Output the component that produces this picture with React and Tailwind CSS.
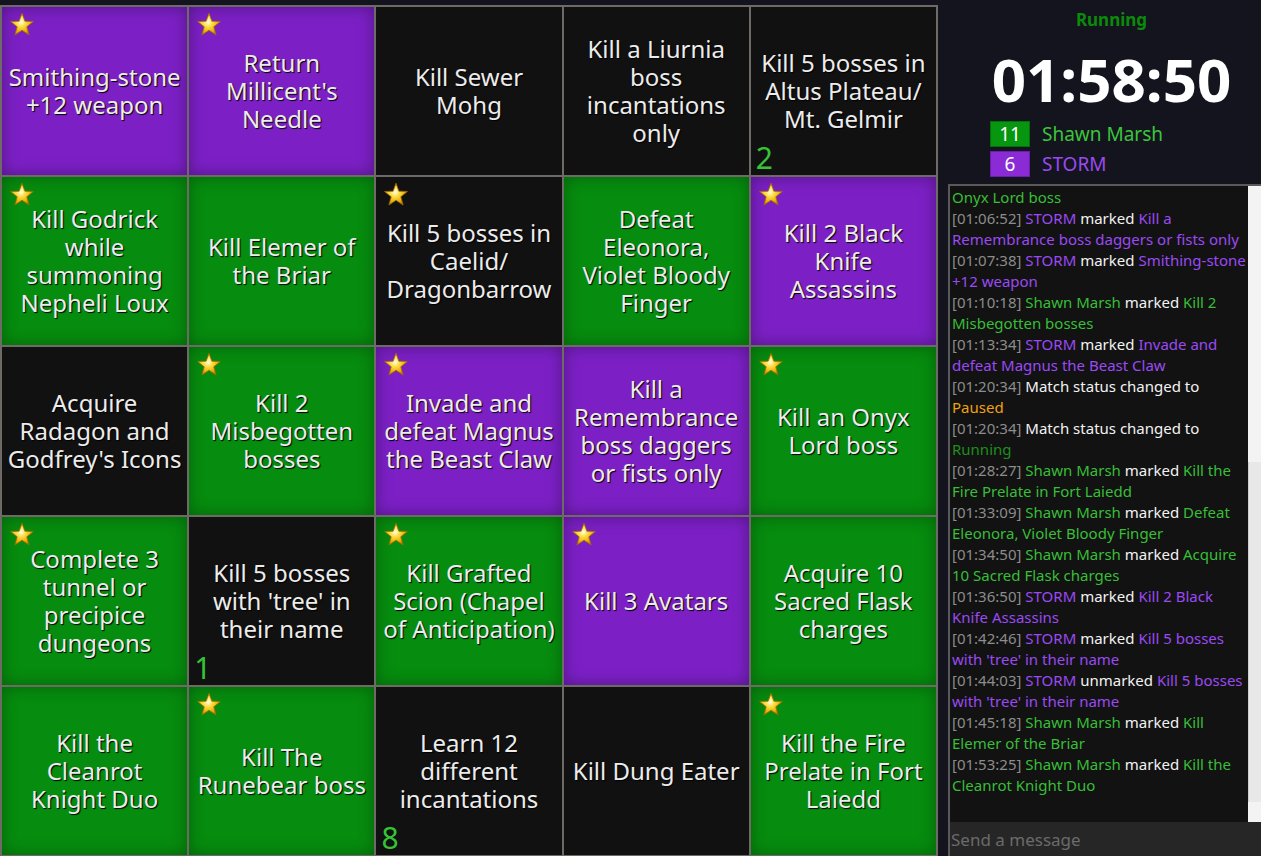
import React from "react";

const P = "purple";
const G = "green";
const B = "black";

const cells = [
  { c: P, star: true, text: "Smithing-stone\n+12 weapon" },
  { c: P, star: true, text: "Return\nMillicent's\nNeedle" },
  { c: B, text: "Kill Sewer\nMohg" },
  { c: B, text: "Kill a Liurnia\nboss\nincantations\nonly" },
  { c: B, text: "Kill 5 bosses in\nAltus Plateau/\nMt. Gelmir", count: 2 },

  { c: G, star: true, text: "Kill Godrick\nwhile\nsummoning\nNepheli Loux" },
  { c: G, text: "Kill Elemer of\nthe Briar" },
  { c: B, star: true, text: "Kill 5 bosses in\nCaelid/\nDragonbarrow" },
  { c: G, text: "Defeat\nEleonora,\nViolet Bloody\nFinger" },
  { c: P, star: true, text: "Kill 2 Black\nKnife\nAssassins" },

  { c: B, text: "Acquire\nRadagon and\nGodfrey's Icons" },
  { c: G, star: true, text: "Kill 2\nMisbegotten\nbosses" },
  { c: P, star: true, text: "Invade and\ndefeat Magnus\nthe Beast Claw" },
  { c: P, text: "Kill a\nRemembrance\nboss daggers\nor fists only" },
  { c: G, star: true, text: "Kill an Onyx\nLord boss" },

  { c: G, star: true, text: "Complete 3\ntunnel or\nprecipice\ndungeons" },
  { c: B, text: "Kill 5 bosses\nwith 'tree' in\ntheir name", count: 1 },
  { c: G, star: true, text: "Kill Grafted\nScion (Chapel\nof Anticipation)" },
  { c: P, star: true, text: "Kill 3 Avatars" },
  { c: G, text: "Acquire 10\nSacred Flask\ncharges" },

  { c: G, text: "Kill the\nCleanrot\nKnight Duo" },
  { c: G, star: true, text: "Kill The\nRunebear boss" },
  { c: B, text: "Learn 12\ndifferent\nincantations", count: 8 },
  { c: B, text: "Kill Dung Eater" },
  { c: G, star: true, text: "Kill the Fire\nPrelate in Fort\nLaiedd" },
];

const cellBg = {
  purple: "bg-[#7c20c6] shadow-[inset_0_0_16px_rgba(0,0,0,0.35)]",
  green: "bg-[#068c0e] shadow-[inset_0_0_16px_rgba(0,0,0,0.3)]",
  black: "bg-[#111111]",
};

const GREEN = "text-[#38be38]";
const PURPLE = "text-[#9b4af2]";

const log = [
  { time: "01:06:52", who: "STORM", verb: "marked", item: "Kill a\nRemembrance boss daggers or fists only" },
  { time: "01:07:38", who: "STORM", verb: "marked", item: "Smithing-stone\n+12 weapon" },
  { time: "01:10:18", who: "Shawn Marsh", verb: "marked", item: "Kill 2\nMisbegotten bosses" },
  { time: "01:13:34", who: "STORM", verb: "marked", item: "Invade and\ndefeat Magnus the Beast Claw" },
  { time: "01:20:34", status: "Paused" },
  { time: "01:20:34", status: "Running" },
  { time: "01:28:27", who: "Shawn Marsh", verb: "marked", item: "Kill the\nFire Prelate in Fort Laiedd" },
  { time: "01:33:09", who: "Shawn Marsh", verb: "marked", item: "Defeat\nEleonora, Violet Bloody Finger" },
  { time: "01:34:50", who: "Shawn Marsh", verb: "marked", item: "Acquire\n10 Sacred Flask charges" },
  { time: "01:36:50", who: "STORM", verb: "marked", item: "Kill 2 Black\nKnife Assassins" },
  { time: "01:42:46", who: "STORM", verb: "marked", item: "Kill 5 bosses\nwith 'tree' in their name" },
  { time: "01:44:03", who: "STORM", verb: "unmarked", item: "Kill 5 bosses\nwith 'tree' in their name" },
  { time: "01:45:18", who: "Shawn Marsh", verb: "marked", item: "Kill\nElemer of the Briar" },
  { time: "01:53:25", who: "Shawn Marsh", verb: "marked", item: "Kill the\nCleanrot Knight Duo" },
];

function Star() {
  return (
    <svg width="26" height="26" viewBox="0 0 26 26" className="absolute left-[7px] top-[5px]">
      <defs>
        <radialGradient id="starGold" cx="45%" cy="42%" r="62%">
          <stop offset="0%" stopColor="#fffbd6" />
          <stop offset="30%" stopColor="#ffe04a" />
          <stop offset="75%" stopColor="#e8a800" />
          <stop offset="100%" stopColor="#b87400" />
        </radialGradient>
      </defs>
      <polygon
        points="13,1.2 15.9,9.2 24.4,9.5 17.8,14.8 20.1,23 13,18.3 5.9,23 8.2,14.8 1.6,9.5 10.1,9.2"
        fill="url(#starGold)"
        stroke="#a06a00"
        strokeWidth="0.8"
        strokeLinejoin="round"
      />
      <polygon points="13,4 14.6,10.4 13,12.6 11.4,10.4" fill="#fffbe0" opacity="0.55" />
    </svg>
  );
}

function Cell({ cell }) {
  return (
    <div className={`relative flex items-center justify-center ${cellBg[cell.c]}`}>
      {cell.star && <Star />}
      <p className="whitespace-pre text-center text-[24px] leading-[28px] text-[#ececec] [text-shadow:1px_1px_1px_#000]">
        {cell.text}
      </p>
      {cell.count && (
        <span className="absolute bottom-[5px] left-[5px] text-[30px] leading-[24px] text-[#35c435]">
          {cell.count}
        </span>
      )}
    </div>
  );
}

function Entry({ e }) {
  if (e.status) {
    return (
      <div>
        <div>
          <span className="text-[#8c8c8c]">[{e.time}]</span>
          <span className="text-[#f2f2f2]"> Match status changed to</span>
        </div>
        <div className={e.status === "Paused" ? "text-[#f0a010]" : "text-[#1e8e1e]"}>{e.status}</div>
      </div>
    );
  }
  const col = e.who === "STORM" ? PURPLE : GREEN;
  const [first, rest] = e.item.split("\n");
  return (
    <div className="whitespace-nowrap">
      <div>
        <span className="text-[#8c8c8c]">[{e.time}]</span>{" "}
        <span className={col}>{e.who}</span>{" "}
        <span className="text-[#f2f2f2]">{e.verb}</span>{" "}
        <span className={col}>{first}</span>
      </div>
      <div className={col}>{rest}</div>
    </div>
  );
}

export default function App() {
  return (
    <div
      className="flex h-[856px] w-full overflow-hidden bg-[#13141d]"
      style={{ fontFamily: "'Noto Sans', sans-serif" }}
    >
      {/* BOARD */}
      <div className="mt-[5px] grid h-[852px] w-[938px] shrink-0 grid-cols-5 grid-rows-[repeat(5,168px)] gap-[2px] bg-[#6e6a66] p-[2px]">
        {cells.map((cell, i) => (
          <Cell key={i} cell={cell} />
        ))}
      </div>

      {/* SIDE PANEL */}
      <div className="ml-[10px] flex min-w-0 flex-1 flex-col">
        <div className="pl-[14px] pt-[8px] text-center">
          <div className="text-[17px] font-bold leading-[24px] text-[#0b8a0b]">Running</div>
          <div className="mt-[12px] text-[60px] font-bold leading-[70px] text-white">01:58:50</div>
        </div>

        <div className="mt-[7px] flex flex-col gap-[4px] pl-[42px]">
          <div className="flex items-center gap-[12px]">
            <div className="flex h-[26px] w-[40px] items-center justify-center border border-[#05700b] bg-[#07960f] text-[19px] leading-[24px] text-white">
              11
            </div>
            <span className="text-[19px] leading-[26px] text-[#3cc43c]">Shawn Marsh</span>
          </div>
          <div className="flex items-center gap-[12px]">
            <div className="flex h-[26px] w-[40px] items-center justify-center border border-[#6a1fa6] bg-[#8a2bd6] text-[19px] leading-[24px] text-white">
              6
            </div>
            <span className="text-[19px] leading-[26px] text-[#9b4af2]">STORM</span>
          </div>
        </div>

        {/* CHAT */}
        <div className="mt-[7px] flex min-h-0 flex-1 flex-col border-l-2 border-t-2 border-[#595959]">
          <div className="flex min-h-0 flex-1 bg-[#121212]">
            <div className="min-w-0 flex-1 overflow-hidden pl-[2px] pt-[1px] text-[15px] leading-[21px]">
              <div className={GREEN}>Onyx Lord boss</div>
              {log.map((e, i) => (
                <Entry key={i} e={e} />
              ))}
            </div>
            <div className="flex w-[13px] shrink-0 flex-col bg-[#f3f3f3]">
              <div className="h-[276px]" />
              <div className="h-[340px] border-l border-[#cfcfcf] bg-[#e8e8e8]" />
            </div>
          </div>
          <input
            placeholder="Send a message"
            className="h-[34px] w-full bg-[#262626] px-[1px] text-[17px] text-white outline-none placeholder:text-[#6b6b6b]"
          />
        </div>
      </div>
    </div>
  );
}
